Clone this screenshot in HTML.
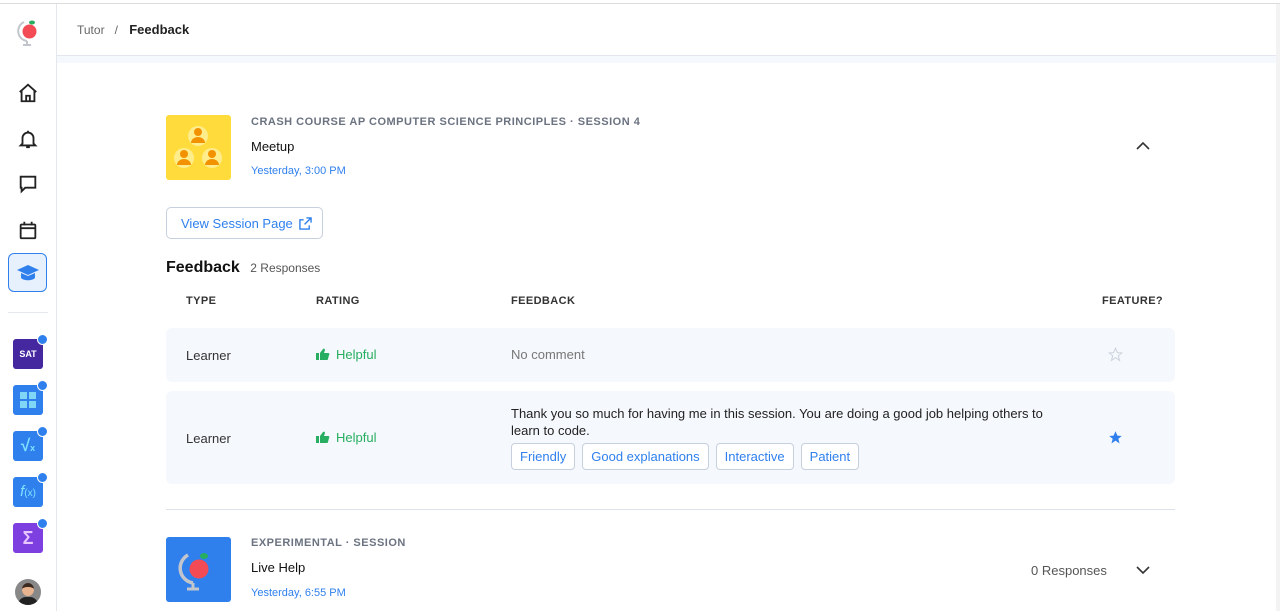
<!DOCTYPE html>
<html><head><meta charset="utf-8"><style>
*{box-sizing:border-box;margin:0;padding:0}
body{width:1280px;height:611px;overflow:hidden;background:#fff;font-family:"Liberation Sans",sans-serif;color:#1a1a1a;position:relative}
.topline{position:absolute;left:0;top:3px;width:1280px;height:1px;background:#ddd}
.side{position:absolute;left:0;top:4px;width:57px;height:607px;border-right:1px solid #e4e7ec;background:#fff}
.hdr{position:absolute;left:57px;top:4px;width:1219px;height:52px;border-bottom:1px solid #e3e6ee}
.band{position:absolute;left:57px;top:56px;width:1219px;height:7px;background:#f5f8fc}
.rsb{position:absolute;left:1276px;top:4px;width:4px;height:607px;background:#f3f3f3}
.crumb{position:absolute;left:77px;top:22px;font-size:12px;color:#666}
.crumb b{color:#222;font-weight:bold;font-size:13px;margin-left:8px}
.nav{position:absolute;left:17px}
.app{position:absolute;left:13px;width:30px;height:30px;border-radius:3px}
.dot{position:absolute;right:-5px;top:-5px;width:11px;height:11px;border-radius:50%;background:#2f80ed;border:1.5px solid #fff}
.abs{position:absolute}
.cap{font-size:11px;letter-spacing:.5px;color:#6b7280;font-weight:bold}
.title{font-size:13px;color:#111}
.date{font-size:11px;color:#2f80ed}
.th{position:absolute;top:295px;font-size:11px;font-weight:bold;letter-spacing:.4px;color:#333}
.row{position:absolute;left:166px;width:1009px;background:#f5f8fc;border-radius:6px}
.cell{position:absolute;font-size:13px;color:#333}
.help{position:absolute;font-size:13px;color:#27ae60}
.tag{display:inline-block;border:1px solid #c7d0de;border-radius:4px;background:#fff;color:#2f80ed;font-size:13px;padding:5px 8px;margin-right:7px}
</style></head><body>
<div class="topline"></div>
<div class="side">
 <svg class="abs" style="left:16px;top:14px" width="26" height="30" viewBox="0 0 26 30"><path d="M8 4 A10 10 0 0 0 11 23" stroke="#c2c6cc" stroke-width="2" fill="none"/><path d="M11 23v3M7 27h8" stroke="#c2c6cc" stroke-width="2"/><circle cx="13.5" cy="13.5" r="7" fill="#f24b55"/><ellipse cx="16" cy="4.5" rx="3" ry="2" fill="#27ae60"/></svg>
 <svg class="nav" style="top:78px" width="22" height="22" viewBox="0 0 24 24" fill="none" stroke="#222" stroke-width="2"><path d="M3 11l9-8 9 8M5 9v12h14V9M10 21v-6h4v6"/></svg>
 <svg class="nav" style="top:124px" width="22" height="22" viewBox="0 0 24 24" fill="none" stroke="#222" stroke-width="2"><path d="M6 17V11a6 6 0 0112 0v6l2 2H4zM10 21h4M12 3v2"/></svg>
 <svg class="nav" style="top:169px" width="22" height="22" viewBox="0 0 24 24" fill="none" stroke="#222" stroke-width="2"><path d="M4 4h16v12H9l-4 4v-4H4z"/></svg>
 <svg class="nav" style="top:215px" width="22" height="22" viewBox="0 0 24 24" fill="none" stroke="#222" stroke-width="2"><rect x="4" y="6" width="16" height="15" rx="1"/><path d="M4 10h16M8 3v4M16 3v4"/></svg>
 <div class="abs" style="left:8px;top:249px;width:39px;height:39px;border:1.5px solid #2f80ed;border-radius:6px;background:#e6f1fd"></div>
 <svg class="abs" style="left:16px;top:260px" width="24" height="18" viewBox="0 0 24 18"><path d="M12 1L1 6l11 5 11-5z" fill="#2f80ed"/><path d="M5 9v5c3 3 11 3 14 0V9l-7 3z" fill="#2f80ed"/></svg>
 <div class="abs" style="left:8px;top:308px;width:40px;height:1px;background:#e4e7ec"></div>
 <div class="app" style="top:335px;background:#4527a0;color:#fff;font-size:9px;font-weight:bold;text-align:center;line-height:30px">SAT<div class="dot"></div></div>
 <div class="app" style="top:381px;background:#2f80ed"><svg width="30" height="30"><rect x="7" y="7" width="7" height="7" fill="#7fd6f7"/><rect x="16" y="7" width="7" height="7" fill="#7fd6f7"/><rect x="7" y="16" width="7" height="7" fill="#7fd6f7"/><rect x="16" y="16" width="7" height="7" fill="#7fd6f7"/></svg><div class="dot"></div></div>
 <div class="app" style="top:427px;background:#2f80ed;color:#7fe3ff;font-size:17px;font-weight:bold;text-align:center;line-height:30px">√<span style="font-size:9px">x</span><div class="dot"></div></div>
 <div class="app" style="top:473px;background:#2f80ed;color:#7fe3ff;font-size:15px;font-style:italic;text-align:center;line-height:30px">f<span style="font-size:10px;font-style:normal">(x)</span><div class="dot"></div></div>
 <div class="app" style="top:519px;background:#7e3fe0;color:#e7c5ff;font-size:18px;font-weight:bold;text-align:center;line-height:30px">Σ<div class="dot"></div></div>
 <div class="abs" style="left:15px;top:575px;width:26px;height:26px;border-radius:50%;background:#888;overflow:hidden"><div class="abs" style="left:7px;top:4px;width:12px;height:13px;border-radius:50%;background:#e8b48f;border-top:4px solid #3a2a20"></div><div class="abs" style="left:3px;top:18px;width:20px;height:10px;border-radius:8px 8px 0 0;background:#222"></div></div>
</div>
<div class="hdr"></div><div class="band"></div><div class="rsb"></div>
<div class="crumb">Tutor &nbsp; / <b>Feedback</b></div>

<div class="abs" style="left:166px;top:115px;width:65px;height:65px;background:#ffdb3b;border-radius:3px">
 <svg width="65" height="65"><g><circle cx="32" cy="21" r="10" fill="#ffec8a"/><circle cx="32" cy="17" r="4" fill="#f39200"/><path d="M25 28a7 6 0 0114 0z" fill="#f39200"/><circle cx="18" cy="43" r="10" fill="#ffec8a"/><circle cx="18" cy="39" r="4" fill="#f39200"/><path d="M11 50a7 6 0 0114 0z" fill="#f39200"/><circle cx="46" cy="43" r="10" fill="#ffec8a"/><circle cx="46" cy="39" r="4" fill="#f39200"/><path d="M39 50a7 6 0 0114 0z" fill="#f39200"/></g></svg>
</div>
<div class="abs cap" style="left:251px;top:116px">CRASH COURSE AP COMPUTER SCIENCE PRINCIPLES · SESSION 4</div>
<div class="abs title" style="left:251px;top:139px">Meetup</div>
<div class="abs date" style="left:251px;top:165px">Yesterday, 3:00 PM</div>
<svg class="abs" style="left:1136px;top:141px" width="14" height="10" viewBox="0 0 14 10"><path d="M1 8l6-6 6 6" stroke="#333" stroke-width="1.6" fill="none"/></svg>

<div class="abs" style="left:166px;top:207px;width:157px;height:32px;border:1px solid #c7d0de;border-radius:5px;color:#2f80ed;font-size:13px;padding:8px 0 0 14px">View Session Page <svg width="13" height="13" viewBox="0 0 14 14" style="vertical-align:-2px;margin-left:3px"><path d="M8 1h5v5M13 1L6 8M11 9v4H1V3h4" stroke="#2f80ed" stroke-width="1.5" fill="none"/></svg></div>

<div class="abs" style="left:166px;top:259px;font-size:16px;font-weight:bold;color:#111">Feedback <span style="font-size:12px;font-weight:normal;color:#555;margin-left:6px">2 Responses</span></div>
<div class="th" style="left:186px">TYPE</div>
<div class="th" style="left:316px">RATING</div>
<div class="th" style="left:511px">FEEDBACK</div>
<div class="th" style="left:1102px">FEATURE?</div>

<div class="row" style="top:328px;height:54px"></div>
<div class="cell" style="left:186px;top:348px">Learner</div>
<div class="help" style="left:316px;top:347px"><svg width="14" height="12" viewBox="0 0 14 12" style="vertical-align:-1px;margin-right:6px"><rect x="0" y="5" width="3" height="7" fill="#27ae60"/><path d="M4 5l3-4c1-1 2 0 2 1l-1 3h4c1 0 2 1 1 2l-1 4c0 1-1 1-2 1H4z" fill="#27ae60"/></svg>Helpful</div>
<div class="cell" style="left:511px;top:347px;color:#777">No comment</div>
<svg class="abs" style="left:1108px;top:347px" width="15" height="15" viewBox="0 0 24 24"><path d="M12 2l3 7 7 .5-5.5 4.5 2 7.5L12 17l-6.5 4.5 2-7.5L2 9.5 9 9z" fill="none" stroke="#ccd3dd" stroke-width="1.6"/></svg>

<div class="row" style="top:391px;height:93px"></div>
<div class="cell" style="left:186px;top:431px">Learner</div>
<div class="help" style="left:316px;top:430px"><svg width="14" height="12" viewBox="0 0 14 12" style="vertical-align:-1px;margin-right:6px"><rect x="0" y="5" width="3" height="7" fill="#27ae60"/><path d="M4 5l3-4c1-1 2 0 2 1l-1 3h4c1 0 2 1 1 2l-1 4c0 1-1 1-2 1H4z" fill="#27ae60"/></svg>Helpful</div>
<div class="cell" style="left:511px;top:405px;width:545px;line-height:17px;color:#222">Thank you so much for having me in this session. You are doing a good job helping others to learn to code.</div>
<div class="abs" style="left:511px;top:443px;white-space:nowrap"><span class="tag">Friendly</span><span class="tag">Good explanations</span><span class="tag">Interactive</span><span class="tag">Patient</span></div>
<svg class="abs" style="left:1108px;top:430px" width="15" height="15" viewBox="0 0 24 24"><path d="M12 2l3 7 7 .5-5.5 4.5 2 7.5L12 17l-6.5 4.5 2-7.5L2 9.5 9 9z" fill="#2f80ed"/></svg>

<div class="abs" style="left:166px;top:509px;width:1009px;height:1px;background:#dde2ea"></div>

<div class="abs" style="left:166px;top:537px;width:65px;height:65px;background:#2f80ed;border-radius:3px">
 <svg width="65" height="65"><path d="M22 18A15 15 0 0 0 27 46" stroke="#c2c6cc" stroke-width="3.5" fill="none"/><path d="M27 46v5M21 52h12" stroke="#c2c6cc" stroke-width="3"/><circle cx="33" cy="32" r="9.5" fill="#f24b55"/><ellipse cx="38" cy="19" rx="4" ry="3" fill="#27ae60"/></svg>
</div>
<div class="abs cap" style="left:251px;top:537px">EXPERIMENTAL · SESSION</div>
<div class="abs title" style="left:251px;top:560px">Live Help</div>
<div class="abs date" style="left:251px;top:587px">Yesterday, 6:55 PM</div>
<div class="abs" style="left:1031px;top:563px;font-size:13px;color:#555">0 Responses</div>
<svg class="abs" style="left:1136px;top:565px" width="14" height="10" viewBox="0 0 14 10"><path d="M1 2l6 6 6-6" stroke="#333" stroke-width="1.6" fill="none"/></svg>
</body></html>
